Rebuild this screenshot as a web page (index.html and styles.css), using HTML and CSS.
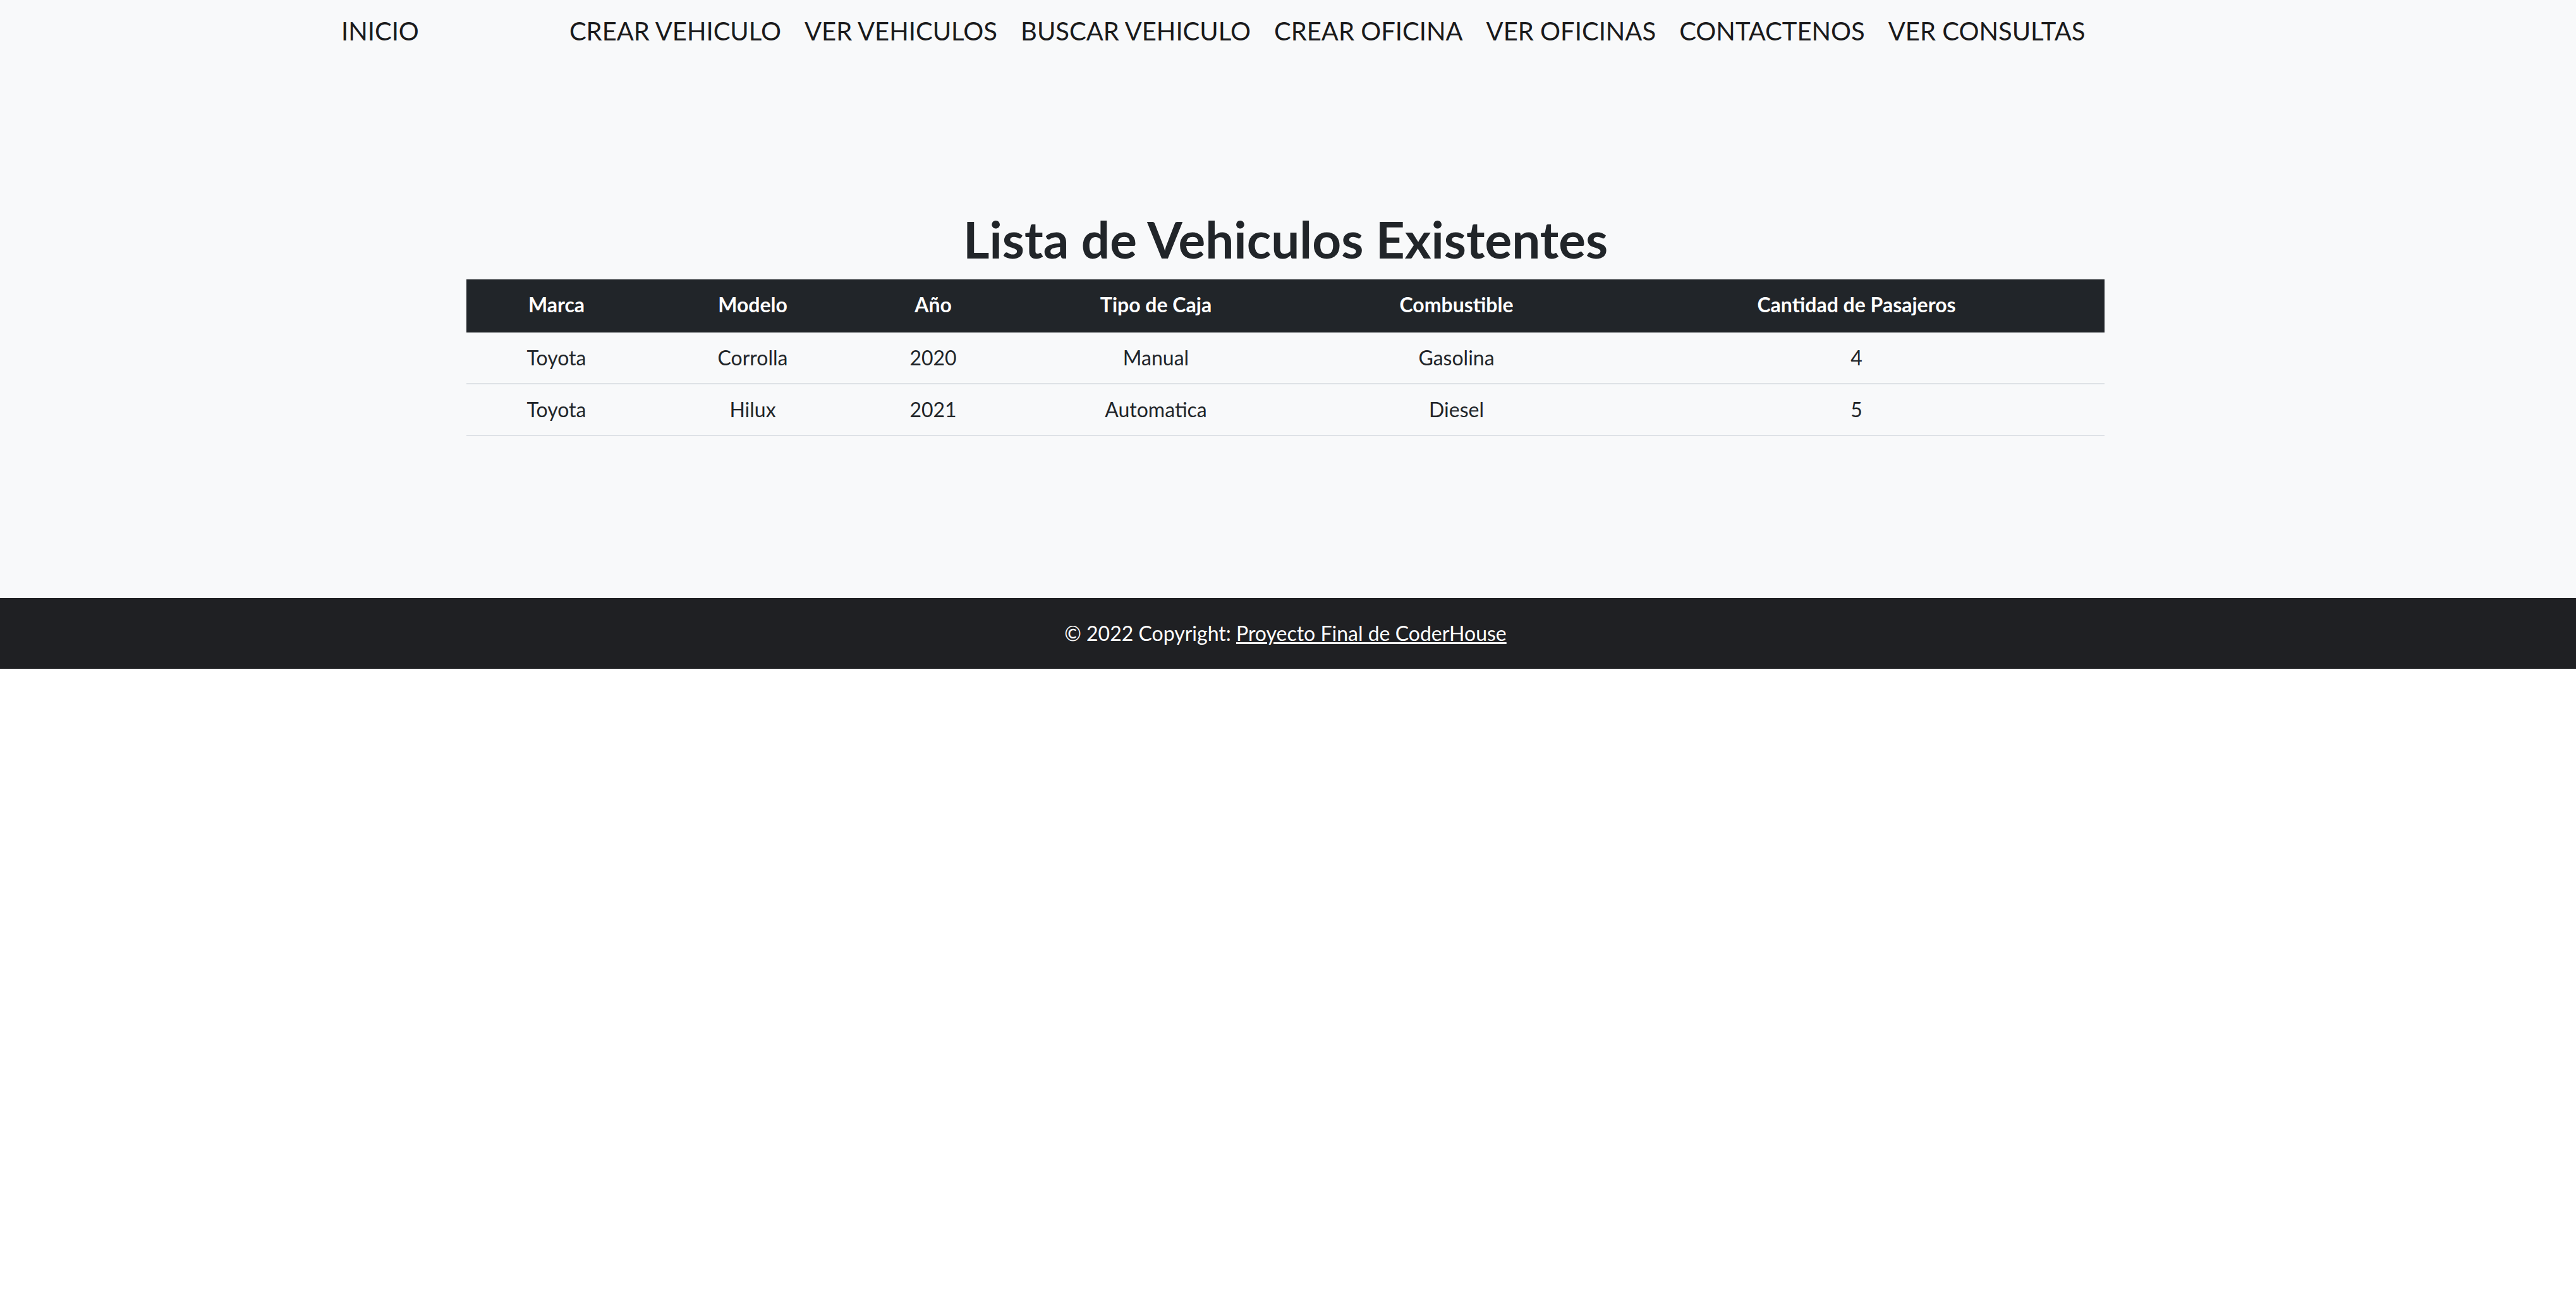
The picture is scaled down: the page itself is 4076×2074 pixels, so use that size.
FILE: index.html
```html
<!DOCTYPE html>
<html lang="es">
<head>
<meta charset="utf-8">
<title>Lista de Vehiculos</title>
<link rel="stylesheet" href="styles.css">
</head>
<body>
<div class="page">
  <nav class="navbar">
    <a class="brand" href="#">INICIO</a>
    <ul class="nav-links">
      <li><a href="#">CREAR VEHICULO</a></li>
      <li><a href="#">VER VEHICULOS</a></li>
      <li><a href="#">BUSCAR VEHICULO</a></li>
      <li><a href="#">CREAR OFICINA</a></li>
      <li><a href="#">VER OFICINAS</a></li>
      <li><a href="#">CONTACTENOS</a></li>
      <li><a href="#">VER CONSULTAS</a></li>
    </ul>
  </nav>
  <main class="content">
    <h1 class="title">Lista de Vehiculos Existentes</h1>
    <table class="vehicles">
      <colgroup>
        <col class="c1"><col class="c2"><col class="c3"><col class="c4"><col class="c5"><col class="c6">
      </colgroup>
      <thead>
        <tr>
          <th>Marca</th><th>Modelo</th><th>Año</th><th>Tipo de Caja</th><th>Combustible</th><th>Cantidad de Pasajeros</th>
        </tr>
      </thead>
      <tbody>
        <tr>
          <td>Toyota</td><td>Corrolla</td><td>2020</td><td>Manual</td><td>Gasolina</td><td>4</td>
        </tr>
        <tr>
          <td>Toyota</td><td>Hilux</td><td>2021</td><td>Automatica</td><td>Diesel</td><td>5</td>
        </tr>
      </tbody>
    </table>
  </main>
</div>
<footer class="footer">
  © 2022 Copyright: <a href="#">Proyecto Final de CoderHouse</a>
</footer>
</body>
</html>
```

FILE: styles.css
```css
html, body {
  margin: 0;
  padding: 0;
  background: #ffffff;
}
body {
  font-family: Lato, "Open Sans", Arial, sans-serif;
  color: #212529;
}
.page {
  background: #f8f9fa;
}
.navbar {
  display: flex;
  align-items: center;
  padding: 19px 0 0 540px;
  font-size: 40px;
  line-height: 60px;
}
.navbar a {
  color: #1a1a1b;
  text-decoration: none;
}
.brand {
  margin-right: 238px;
}
.nav-links {
  display: flex;
  gap: 37px;
  list-style: none;
  margin: 0;
  padding: 0;
}
.content {
  width: 2592px;
  margin: 0 auto;
  padding: 251px 0 256px;
  position: relative;
  left: -4px;
}
.title {
  margin: 0 0 16px;
  text-align: center;
  font-size: 80px;
  line-height: 96px;
  font-weight: 700;
  color: #212529;
}
.vehicles {
  width: 2592px;
  table-layout: fixed;
  border-collapse: separate;
  border-spacing: 0;
  font-size: 32px;
  line-height: 48px;
}
.c1 { width: 285px; }
.c2 { width: 336px; }
.c3 { width: 235px; }
.c4 { width: 470px; }
.c5 { width: 481px; }
.c6 { width: 785px; }
.vehicles th, .vehicles td {
  padding: 16px 0;
  text-align: center;
}
.vehicles th {
  background: #212529;
  color: #ffffff;
  font-weight: 700;
  border-bottom: 4px solid #212529;
}
.vehicles td {
  color: #212529;
  border-bottom: 2px solid #dee2e6;
}
.footer {
  background: #1f2023;
  color: #ffffff;
  text-align: center;
  font-size: 32px;
  line-height: 48px;
  padding: 32px 8px 32px 0;
}
.footer a {
  color: #ffffff;
  text-decoration: underline;
}
```
